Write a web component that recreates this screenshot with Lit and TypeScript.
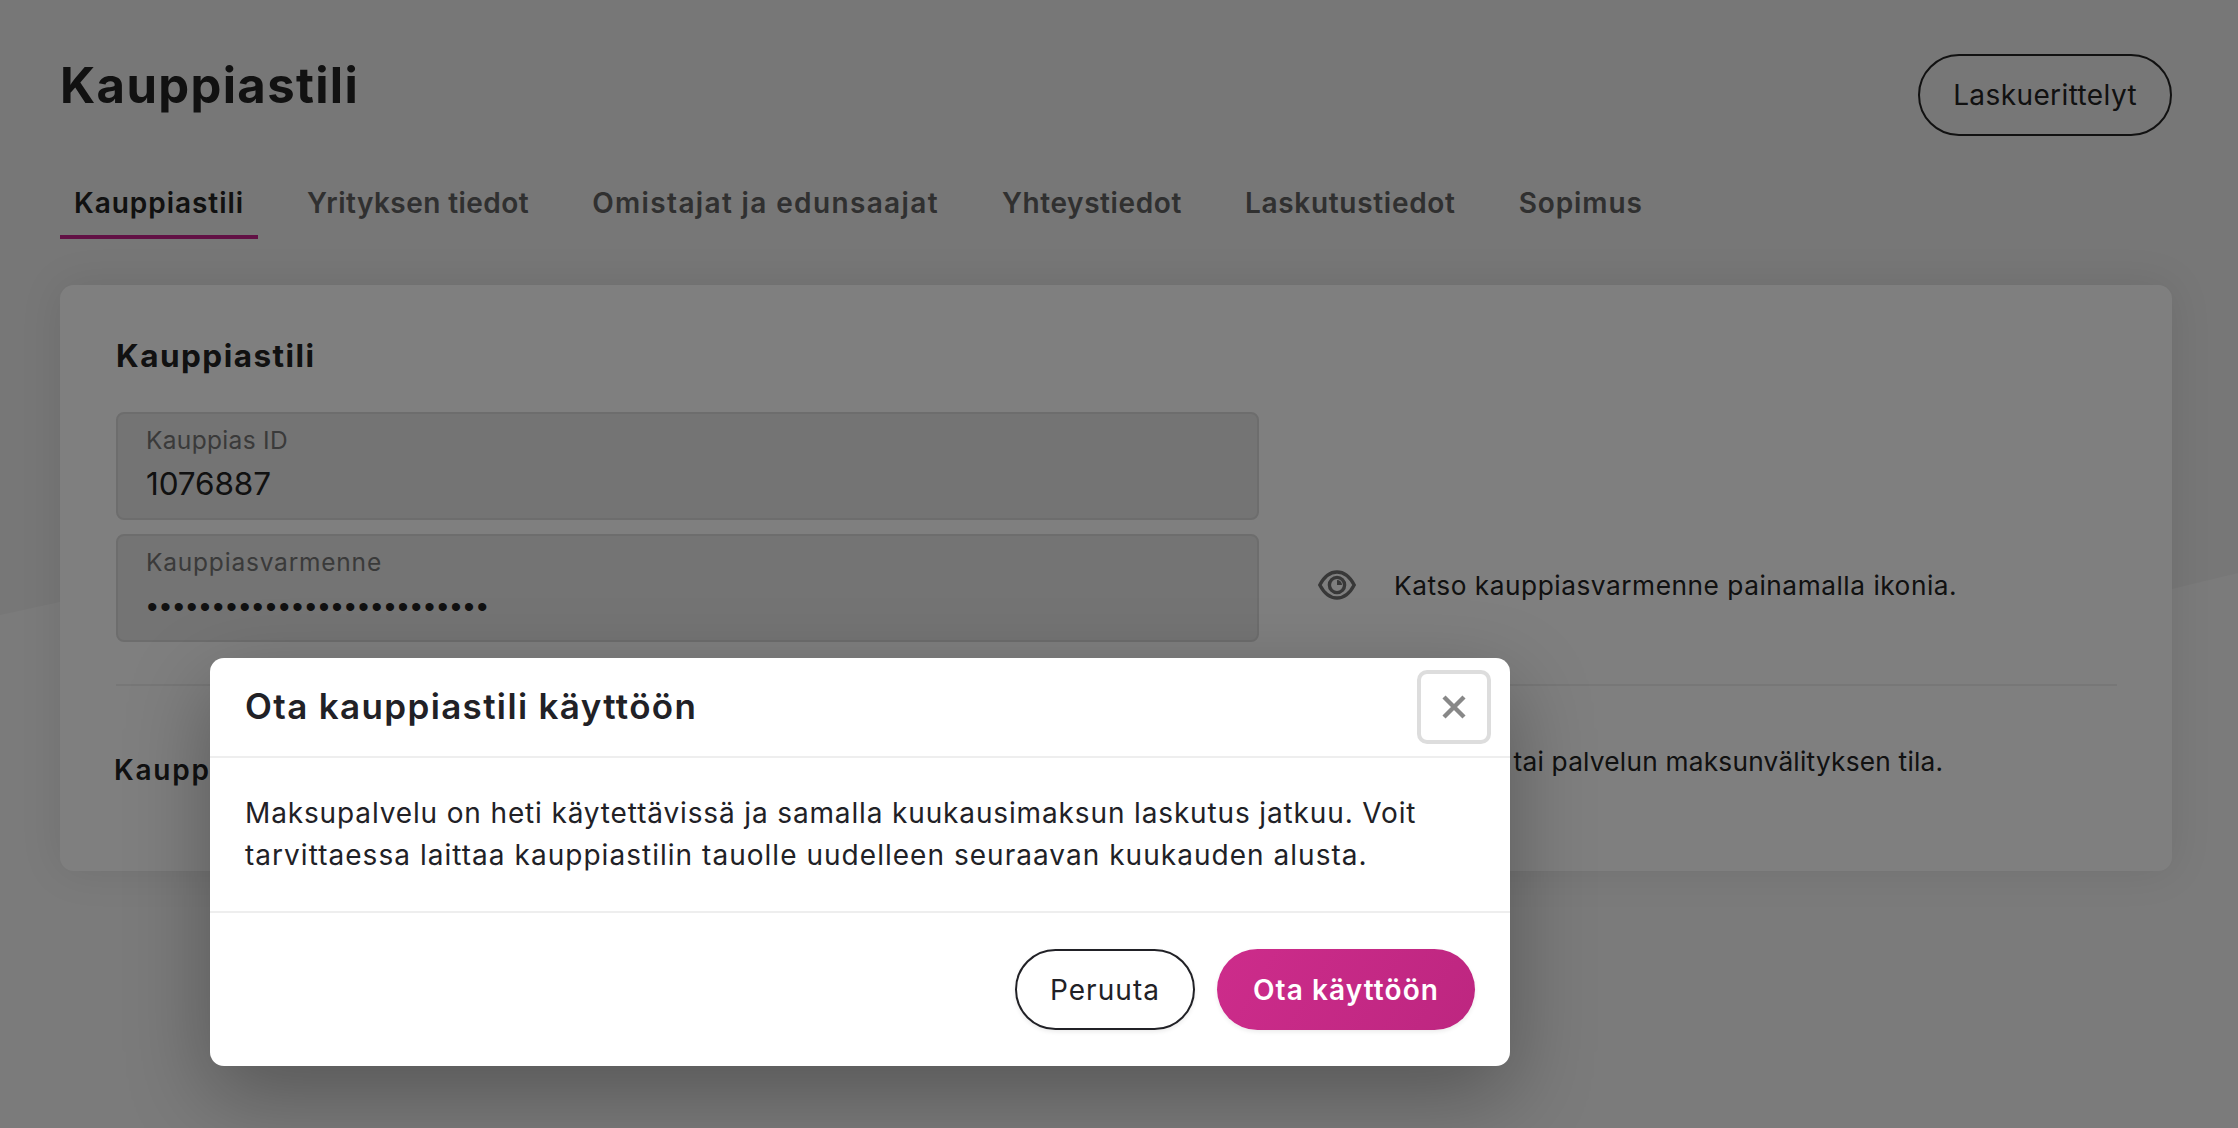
import { LitElement, html, css } from "lit";
import { customElement } from "lit/decorators.js";

const TABS = [
  { label: "Kauppiastili", ls: 0.96, active: true },
  { label: "Yrityksen tiedot", ls: 0.45 },
  { label: "Omistajat ja edunsaajat", ls: 1.36 },
  { label: "Yhteystiedot", ls: 0.6 },
  { label: "Laskutustiedot", ls: 0.7 },
  { label: "Sopimus", ls: 0.89 },
];

@customElement("app-root")
export class AppRoot extends LitElement {
  static styles = css`
    :host {
      display: block;
      position: relative;
      width: 100%;
      height: 100vh;
      overflow: hidden;
      background: #eeeeee;
      font-family: Inter, "Noto Sans", sans-serif;
      color: #222;
    }
    .wave {
      position: absolute;
      inset: 0;
      background: #f6f6f6;
      clip-path: polygon(0 615px, 60px 602px, 1100px 560px, 2172px 589px, 2238px 573px, 2238px 1128px, 0 1128px);
    }
    .page {
      position: relative;
      padding: 54px 66px 0 60px;
    }
    .top {
      display: flex;
      justify-content: space-between;
      align-items: flex-start;
    }
    h1 {
      margin: 0;
      font-size: 49px;
      line-height: 63px;
      font-weight: 700;
      letter-spacing: 1.35px;
      color: #222;
    }
    .btn {
      box-sizing: border-box;
      height: 82px;
      border-radius: 41px;
      border: 2px solid #222;
      padding: 0 33px;
      display: flex;
      align-items: center;
      font-size: 28px;
      letter-spacing: 0.4px;
      color: #222;
    }
    .tabs {
      display: flex;
      gap: 35px;
      margin-top: 45px;
    }
    .tab {
      padding: 1px 14px 11px;
      font-size: 28px;
      line-height: 42px;
      font-weight: 600;
      color: #606060;
      border-bottom: 4px solid transparent;
    }
    .tab.active {
      color: #222;
      border-bottom-color: #c4228a;
    }
    .card {
      margin-top: 46px;
      background: #fff;
      border-radius: 14px;
      padding: 49px 55px 80px 56px;
      box-shadow: 0 0 44px rgba(0, 0, 0, 0.09);
    }
    h2 {
      margin: 0 0 36px;
      padding-top: 1px;
      font-size: 31.5px;
      line-height: 41px;
      font-weight: 700;
      letter-spacing: 1.48px;
      color: #222;
    }
    .grid {
      display: grid;
      grid-template-columns: 1143px 1fr;
      column-gap: 59px;
      row-gap: 14px;
      align-items: center;
    }
    .field {
      box-sizing: border-box;
      height: 108px;
      border: 2px solid #dadada;
      border-radius: 8px;
      background: #e8e8e8;
      padding: 9px 28px 0;
    }
    .label {
      font-size: 24.5px;
      line-height: 35px;
      color: #757575;
      letter-spacing: 0.32px;
    }
    .label.wide {
      letter-spacing: 0.79px;
    }
    .value {
      font-size: 31.5px;
      line-height: 52px;
      color: #222;
      letter-spacing: -0.11px;
    }
    .dots {
      font-family: "Liberation Sans", sans-serif;
      font-size: 30px;
      line-height: 54px;
      letter-spacing: 2.7px;
      color: #222;
      margin-left: 1px;
    }
    .hint {
      display: flex;
      align-items: center;
      gap: 38px;
      font-size: 26.25px;
      line-height: 39px;
      letter-spacing: 0.53px;
      color: #222;
      margin-bottom: 6px;
    }
    .eye {
      width: 38px;
      height: 30px;
      flex: none;
      display: block;
    }
    hr {
      border: 0;
      height: 2px;
      background: #eee;
      margin: 42px 0 0;
    }
    .status {
      display: grid;
      grid-template-columns: 1294px 1fr;
      align-items: start;
      padding-top: 56px;
    }
    .status-label {
      margin: 7px 0 0 -2px;
      font-size: 28px;
      line-height: 42px;
      font-weight: 600;
      letter-spacing: 1.8px;
    }
    .status-text {
      font-size: 26.25px;
      line-height: 39px;
      letter-spacing: 0.23px;
    }
    .overlay {
      position: absolute;
      inset: 0;
      background: rgba(0, 0, 0, 0.5);
    }
    .modal {
      margin: 658px 0 0 210px;
      width: 1300px;
      height: 408px;
      box-sizing: border-box;
      background: #fff;
      border-radius: 14px;
      box-shadow: 0 28px 84px rgba(0, 0, 0, 0.3);
      color: #212126;
      display: flex;
      flex-direction: column;
    }
    .m-head {
      display: flex;
      justify-content: space-between;
      align-items: center;
      padding: 12px 19px 12px 35px;
      border-bottom: 2px solid #eee;
    }
    .m-title {
      font-size: 35px;
      line-height: 50px;
      padding-bottom: 2px;
      font-weight: 600;
      letter-spacing: 1.35px;
    }
    .close {
      box-sizing: border-box;
      width: 74px;
      height: 74px;
      border: 4px solid #ddd;
      border-radius: 10px;
      display: flex;
      align-items: center;
      justify-content: center;
    }
    .close svg {
      width: 24px;
      height: 24px;
      display: block;
    }
    .m-body {
      padding: 34px 35px 35px;
      font-size: 28px;
      line-height: 42px;
    }
    .l1 {
      letter-spacing: 0.86px;
    }
    .l2 {
      letter-spacing: 1.03px;
    }
    .m-foot {
      display: flex;
      justify-content: flex-end;
      gap: 22px;
      padding: 36px 35px;
      border-top: 2px solid #eee;
    }
    .m-btn {
      box-sizing: border-box;
      height: 81px;
      border-radius: 41px;
      display: flex;
      align-items: center;
      font-size: 28px;
    }
    .cancel {
      border: 2px solid #212126;
      padding: 0 33px;
      letter-spacing: 1.05px;
      box-shadow: 0 2px 4px rgba(0, 0, 0, 0.08);
    }
    .ok {
      padding: 0 36px;
      color: #fff;
      font-weight: 600;
      letter-spacing: 1.08px;
      background: linear-gradient(120deg, #cd2c8b, #bd2680);
      box-shadow: 0 2px 4px rgba(0, 0, 0, 0.08);
    }
  `;

  render() {
    return html`
      <div class="wave"></div>
      <div class="page">
        <div class="top">
          <h1>Kauppiastili</h1>
          <div class="btn">Laskuerittelyt</div>
        </div>
        <div class="tabs">
          ${TABS.map(
            (t) =>
              html`<div class="tab ${t.active ? "active" : ""}" style="letter-spacing:${t.ls}px">${t.label}</div>`
          )}
        </div>
        <div class="card">
          <h2>Kauppiastili</h2>
          <div class="grid">
            <div class="field">
              <div class="label">Kauppias ID</div>
              <div class="value">1076887</div>
            </div>
            <div></div>
            <div class="field">
              <div class="label wide">Kauppiasvarmenne</div>
              <div class="dots">••••••••••••••••••••••••••</div>
            </div>
            <div class="hint">
              <svg class="eye" viewBox="0 0 38 30" fill="none" stroke="#707070" aria-hidden="true">
                <path stroke-width="3.4" d="M1.8 15C6 7 12 2 19 2s13 5 17.2 13C32 23 26 28 19 28S6 23 1.8 15Z" />
                <circle stroke-width="3.4" cx="19" cy="15" r="7.6" />
                <path fill="#707070" stroke="none" d="M19 10a5 5 0 0 1 5 5H19Z" />
              </svg>
              <span>Katso kauppiasvarmenne painamalla ikonia.</span>
            </div>
          </div>
          <hr />
          <div class="status">
            <div class="status-label">Kauppiastilin tila</div>
            <div class="status-text">Kaupan tai palvelun maksunvälityksen tila.</div>
          </div>
        </div>
      </div>
      <div class="overlay">
        <div class="modal">
          <div class="m-head">
            <div class="m-title">Ota kauppiastili käyttöön</div>
            <div class="close">
              <svg viewBox="0 0 24 24" fill="none" stroke="#888" stroke-width="4.4" aria-hidden="true">
                <path d="M2 2l20 20M22 2L2 22" />
              </svg>
            </div>
          </div>
          <div class="m-body">
            <div class="l1">Maksupalvelu on heti käytettävissä ja samalla kuukausimaksun laskutus jatkuu. Voit</div>
            <div class="l2">tarvittaessa laittaa kauppiastilin tauolle uudelleen seuraavan kuukauden alusta.</div>
          </div>
          <div class="m-foot">
            <div class="m-btn cancel">Peruuta</div>
            <div class="m-btn ok">Ota käyttöön</div>
          </div>
        </div>
      </div>
    `;
  }
}
